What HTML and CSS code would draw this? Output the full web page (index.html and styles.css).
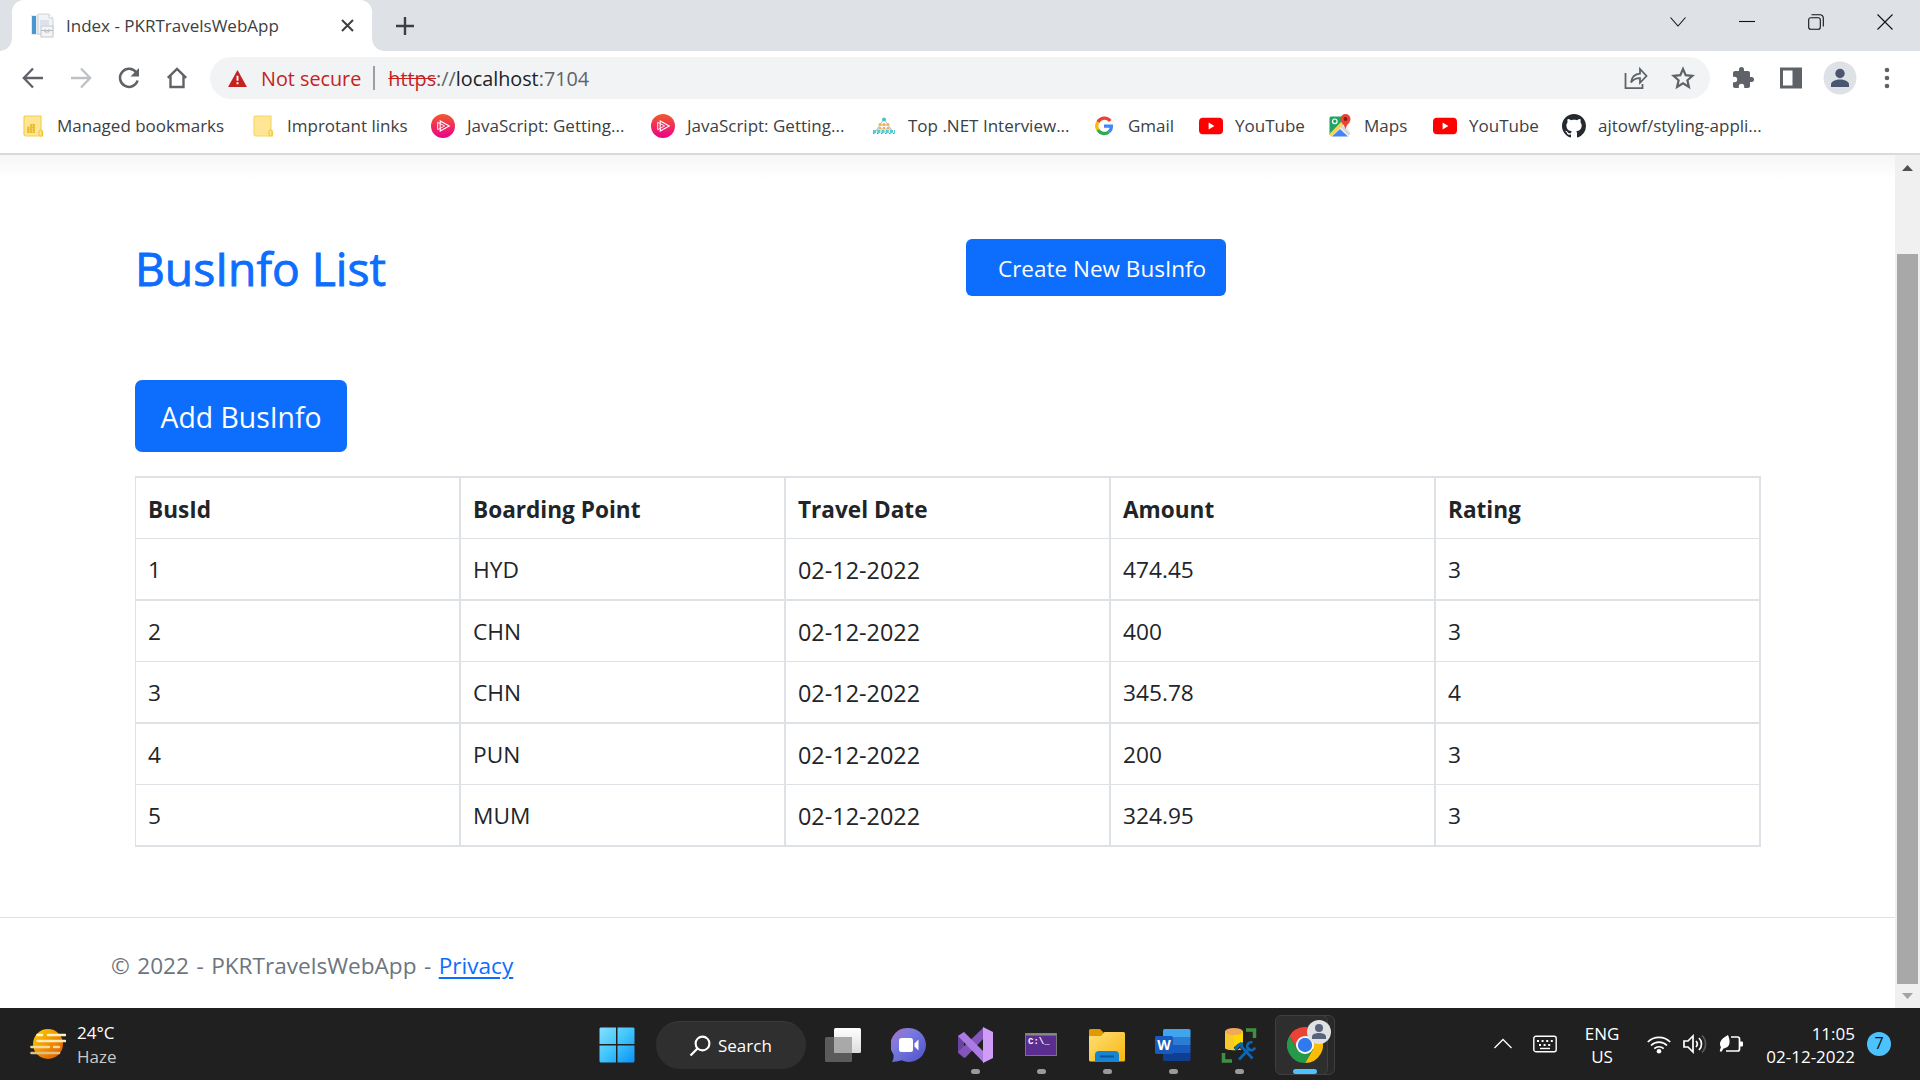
FILE: index.html
```html
<!DOCTYPE html>
<html lang="en">
<head>
<meta charset="utf-8">
<title>Index - PKRTravelsWebApp</title>
<link rel="stylesheet" href="styles.css">
</head>
<body>
<svg class="defs" width="0" height="0" aria-hidden="true">
  <defs>
    <linearGradient id="psg" x1="0" y1="0" x2="0" y2="1"><stop offset="0" stop-color="#f15b2a"/><stop offset="1" stop-color="#ec008c"/></linearGradient>
    <linearGradient id="wing" x1="0" y1="0" x2="1" y2="1"><stop offset="0" stop-color="#85e0ff"/><stop offset=".5" stop-color="#3fc4fb"/><stop offset="1" stop-color="#0a93f8"/></linearGradient>
    <linearGradient id="chatg" x1="0" y1="0" x2="1" y2="1"><stop offset="0" stop-color="#b070c0"/><stop offset=".35" stop-color="#7a7ae0"/><stop offset="1" stop-color="#4f52c8"/></linearGradient>
    <linearGradient id="foldg" x1="0" y1="0" x2="1" y2="1"><stop offset="0" stop-color="#ffe07a"/><stop offset="1" stop-color="#f9b60c"/></linearGradient>
    <linearGradient id="sung" x1="0" y1="0" x2="1" y2="1"><stop offset="0" stop-color="#ffd500"/><stop offset="1" stop-color="#e04e00"/></linearGradient>
    <linearGradient id="viewg" x1="0" y1="0" x2="0" y2="1"><stop offset="0" stop-color="#ffffff"/><stop offset="1" stop-color="#dcdcdc"/></linearGradient>
    <symbol id="pluralsight" viewBox="0 0 24 24">
      <circle cx="12" cy="12" r="12" fill="url(#psg)"/>
      <path d="M9.200 7v10L18.300 12z" fill="none" stroke="#fff" stroke-width="1.100"/>
      <path d="M6.700 8.300v7.400M6.700 8.300l7 3.700-7 3.700" fill="none" stroke="#fff" stroke-width=".9"/>
    </symbol>
    <symbol id="youtube" viewBox="0 0 24 24">
      <rect y="3.700" width="24" height="16.600" rx="4" fill="#f00"/>
      <path d="M9.600 8.600v6.800l5.800-3.400z" fill="#fff"/>
    </symbol>
  </defs>
</svg>

<header class="browser">
  <div class="tabstrip">
    <div class="tab">
      <svg class="favicon" width="25" height="25" viewBox="0 0 25 25">
        <rect x="1" y="2" width="10" height="20" fill="#e3ecf4"/><rect x="2" y="3" width="4" height="18" fill="#4d96cd"/>
        <path d="M8 1h11l4 4v16H8z" fill="#f1f3f7" stroke="#c5c9d1" stroke-width=".8"/><path d="M19 1v4h4" fill="#fff" stroke="#c5c9d1" stroke-width=".8"/>
        <path d="M10 7h9v5h-9z" fill="#dde1ec"/><rect x="11" y="13" width="12" height="11" fill="#f4f4f4" stroke="#b8bbc0" stroke-width=".8"/><path d="M11 17.500h12M15 16v3h4v-3" stroke="#b8bbc0" fill="none"/>
      </svg>
      <span class="tab-title">Index - PKRTravelsWebApp</span>
      <svg class="tab-close" width="13" height="13" viewBox="0 0 13 13"><path d="M1 1l11 11M12 1L1 12" stroke="#3c4043" stroke-width="2"/></svg>
    </div>
    <svg class="newtab" width="18" height="18" viewBox="0 0 18 18"><path d="M9 0v18M0 9h18" stroke="#3c4043" stroke-width="2.400"/></svg>
    <div class="window-controls">
      <svg width="16" height="16" viewBox="0 0 16 16"><path d="M.5 3.500L8 12l7.500-8.500" class="thin"/></svg>
      <svg width="16" height="16" viewBox="0 0 16 16"><path d="M0 7.500h16" class="thin"/></svg>
      <svg width="16" height="16" viewBox="0 0 16 16"><rect x=".7" y="3.700" width="11.600" height="11.600" rx="2" class="thin"/><path d="M3.500 .7h8.500a3.300 3.300 0 0 1 3.300 3.300v8.500" class="thin"/></svg>
      <svg width="16" height="16" viewBox="0 0 16 16"><path d="M.5 .5l15 15M15.500 .5l-15 15" class="thin"/></svg>
    </div>
  </div>

  <div class="toolbar">
    <div class="nav">
      <svg width="24" height="24" viewBox="0 0 24 24"><path d="M22 12H3M12 2.500L2.800 12l9.200 9.500" fill="none" stroke="#5f6368" stroke-width="2.300"/></svg>
      <svg width="24" height="24" viewBox="0 0 24 24"><path d="M2 12h19M12 2.500l9.200 9.500-9.200 9.500" fill="none" stroke="#bdc1c6" stroke-width="2.300"/></svg>
      <svg width="24" height="24" viewBox="0 0 24 24"><path d="M19.300 6.600A9 9 0 1 0 20.600 14.500" fill="none" stroke="#5f6368" stroke-width="2.500"/><path d="M22 2v8.500h-8.500z" fill="#5f6368"/></svg>
      <svg width="24" height="24" viewBox="0 0 24 24"><path d="M2.800 11.800L12 3l9.200 8.800M5.500 10v11h13V10" fill="none" stroke="#5f6368" stroke-width="2.400"/></svg>
    </div>
    <div class="omnibox">
      <svg class="warn" width="19" height="17" viewBox="0 0 20 18"><path d="M10 0l10 18H0z" fill="#c5221f"/><path d="M9 6h2v5.500H9zM9 13h2v2.200H9z" fill="#fff"/></svg>
      <span class="not-secure">Not secure</span>
      <span class="divider"></span>
      <span class="url"><s>https</s>://<b>localhost</b>:7104</span>
      <svg class="share" width="24" height="24" viewBox="0 0 24 24"><path d="M1.500 7v15.200h17V18M7 16.500c.8-5.500 3.500-8.500 9-8.800V3l6.500 7-6.500 6.800v-4.600c-4-.2-6.500 1-9 4.300z" fill="none" stroke="#5f6368" stroke-width="1.800"/></svg>
      <svg class="star" width="24" height="24" viewBox="0 0 24 24"><path d="M12 3l2.700 6.200 6.800.6-5.100 4.500 1.500 6.600-5.900-3.500-5.900 3.500 1.500-6.600-5.100-4.500 6.800-.6z" fill="none" stroke="#5f6368" stroke-width="2.200"/></svg>
    </div>
    <div class="actions">
      <svg width="24" height="24" viewBox="0 0 24 24"><path d="M20.500 11H19V7c0-1.100-.9-2-2-2h-4V3.500a2.500 2.500 0 0 0-5 0V5H4c-1.100 0-2 .9-2 2v3.800h1.500a2.700 2.700 0 0 1 0 5.400H2V20c0 1.100.9 2 2 2h3.800v-1.500a2.700 2.700 0 0 1 5.400 0V22H17c1.100 0 2-.9 2-2v-4h1.500a2.500 2.500 0 0 0 0-5z" fill="#5f6368"/></svg>
      <svg width="24" height="24" viewBox="0 0 24 24"><path d="M1 1.500h22v21H1zM4 4.500v15h9.500v-15z" fill="#5f6368" fill-rule="evenodd"/></svg>
      <svg width="34" height="34" viewBox="0 0 34 34"><circle cx="17" cy="17" r="16.500" fill="#dee1e6"/><circle cx="17" cy="12.500" r="4.700" fill="#4a5670"/><path d="M8 26v-2.500c0-3.500 5-5 9-5s9 1.500 9 5V26z" fill="#4a5670"/></svg>
      <svg width="6" height="22" viewBox="0 0 6 22"><g fill="#5f6368"><circle cx="3" cy="3" r="2.300"/><circle cx="3" cy="11" r="2.300"/><circle cx="3" cy="19" r="2.300"/></g></svg>
    </div>
  </div>

  <nav class="bookmarks">
    <span class="bookmark"><svg width="24" height="24" viewBox="0 0 24 24"><path d="M4 2h16v15h1.500v5H5a2 2 0 0 1-2-2V3z" fill="#ffe694" stroke="#f5cf4b" stroke-width="1.200"/><rect x="18" y="16" width="3" height="6" rx="1.500" fill="#ffe694" stroke="#f0c02e"/><path d="M6 12.500h3V10h5v9H6z" fill="#e6c03c"/><path d="M8 14h1M11 12h1M8 17h1M11 15h1M11 17.500h1" stroke="#ffe694"/></svg><span>Managed bookmarks</span></span>
    <span class="bookmark"><svg width="24" height="24" viewBox="0 0 24 24"><path d="M4 2h16v15h1.500v5H5a2 2 0 0 1-2-2V3z" fill="#ffe694" stroke="#f5d868" stroke-width="1.200"/><rect x="18" y="16" width="3" height="6" rx="1.500" fill="#ffe694" stroke="#f0c02e"/></svg><span>Improtant links</span></span>
    <span class="bookmark"><svg width="24" height="24"><use href="#pluralsight"/></svg><span>JavaScript: Getting...</span></span>
    <span class="bookmark"><svg width="24" height="24"><use href="#pluralsight"/></svg><span>JavaScript: Getting...</span></span>
    <span class="bookmark"><svg width="24" height="24" viewBox="0 0 24 24"><path d="M12 5L3 18M12 5l9 13M8 11h8M5 15h14" stroke="#b4bdc0" stroke-width="1"/><circle cx="12" cy="5.500" r="2" fill="#4fc0c8"/><g fill="#f3b04d"><circle cx="8" cy="10.500" r="1.500"/><circle cx="12" cy="10.500" r="1.500"/><circle cx="16" cy="10.500" r="1.500"/><circle cx="8" cy="14" r="1.300"/><circle cx="12" cy="14" r="1.300"/><circle cx="16" cy="14" r="1.300"/></g><path d="M1 17.500h22" stroke="#5cc8cf" stroke-width="3" stroke-dasharray="3.200 1"/><path d="M1 19.500h22" stroke="#788" stroke-dasharray="1.500 2.500"/></svg><span>Top .NET Interview...</span></span>
    <span class="bookmark"><svg width="24" height="24" viewBox="0 0 24 24"><g fill="none" stroke-width="3.300"><path d="M18.300 7.100A7.400 7.400 0 0 0 5.900 8.100" stroke="#ea4335"/><path d="M5.900 8.100a7.400 7.400 0 0 0 0 7.800" stroke="#fbbc05"/><path d="M5.900 15.900a7.400 7.400 0 0 0 10.800 2.100" stroke="#34a853"/><path d="M16.700 18a7.400 7.400 0 0 0 2.700-5.800H12" stroke="#4285f4"/></g></svg><span>Gmail</span></span>
    <span class="bookmark"><svg width="24" height="24"><use href="#youtube"/></svg><span>YouTube</span></span>
    <span class="bookmark"><svg width="24" height="24" viewBox="0 0 24 24"><path d="M1.500 2.500h20v20h-20z" fill="#f3f4f5"/><path d="M3 2.500h12V9L1.500 21V4a1.500 1.500 0 0 1 1.500-1.500z" fill="#1fa463"/><path d="M15 8.500L2.500 21.500" stroke="#ffd04b" stroke-width="3.600"/><path d="M13 12l8.500 8.500" stroke="#d5d8db" stroke-width="3"/><path d="M4 22.500l8-7.500 8 7.500z" fill="#4285f4"/><circle cx="6.800" cy="7.300" r="2.300" fill="none" stroke="#fff" stroke-width="1.200"/><path d="M17.500 0a5 5 0 0 1 5 5c0 4-4 5-5 10.500-1-5.500-5-6.500-5-10.500a5 5 0 0 1 5-5z" fill="#ea4335"/><circle cx="17.500" cy="5" r="1.900" fill="#8c1a12"/></svg><span>Maps</span></span>
    <span class="bookmark"><svg width="24" height="24"><use href="#youtube"/></svg><span>YouTube</span></span>
    <span class="bookmark"><svg width="24" height="24" viewBox="0 0 16 16"><path fill="#24292f" fill-rule="evenodd" d="M8 0C3.580 0 0 3.580 0 8c0 3.540 2.290 6.530 5.470 7.590.4.070.55-.17.55-.38 0-.19-.01-.82-.01-1.490-2.010.37-2.530-.49-2.690-.94-.09-.23-.48-.94-.82-1.130-.28-.15-.68-.52-.01-.53.63-.01 1.080.58 1.230.82.72 1.210 1.870.87 2.330.66.07-.52.28-.87.51-1.070-1.780-.2-3.640-.89-3.640-3.950 0-.87.31-1.590.82-2.150-.08-.2-.36-1.020.08-2.120 0 0 .67-.21 2.200.82.64-.18 1.320-.27 2-.27s1.360.09 2 .27c1.530-1.040 2.200-.82 2.200-.82.44 1.100.16 1.920.08 2.120.51.56.82 1.270.82 2.150 0 3.070-1.870 3.750-3.650 3.950.29.25.54.73.54 1.480 0 1.070-.01 1.930-.01 2.200 0 .21.15.46.55.38A8.010 8.010 0 0 0 16 8c0-4.420-3.580-8-8-8z"/></svg><span>ajtowf/styling-appli...</span></span>
  </nav>
</header>

<div class="viewport">
  <div class="page">
    <main class="content">
      <div class="title-row">
        <h1>BusInfo List</h1>
        <a class="btn create">Create New BusInfo</a>
      </div>
      <a class="btn add">Add BusInfo</a>
      <table>
        <thead><tr><th>BusId</th><th>Boarding Point</th><th>Travel Date</th><th>Amount</th><th>Rating</th></tr></thead>
        <tbody>
          <tr><td>1</td><td>HYD</td><td class="date">02-12-2022</td><td>474.45</td><td>3</td></tr>
          <tr><td>2</td><td>CHN</td><td class="date">02-12-2022</td><td>400</td><td>3</td></tr>
          <tr><td>3</td><td>CHN</td><td class="date">02-12-2022</td><td>345.78</td><td>4</td></tr>
          <tr><td>4</td><td>PUN</td><td class="date">02-12-2022</td><td>200</td><td>3</td></tr>
          <tr><td>5</td><td>MUM</td><td class="date">02-12-2022</td><td>324.95</td><td>3</td></tr>
        </tbody>
      </table>
    </main>
    <footer>© 2022 - PKRTravelsWebApp - <a>Privacy</a></footer>
  </div>
  <div class="scrollbar">
    <svg width="11" height="6" viewBox="0 0 11 6"><path d="M5.500 0L11 6H0z" fill="#505050"/></svg>
    <div class="thumb"></div>
    <svg width="11" height="6" viewBox="0 0 11 6"><path d="M0 0h11L5.500 6z" fill="#a3a3a3"/></svg>
  </div>
</div>

<div class="taskbar">
  <div class="weather">
    <svg width="36" height="32" viewBox="0 0 36 32"><circle cx="18" cy="16" r="15" fill="url(#sung)"/><g stroke-width="2.600" stroke-linecap="round"><path d="M7.500 7h4.500M18 7h17" stroke="#fff3c4"/><path d="M7.500 13H35" stroke="#fdeab8"/><path d="M1.500 19H19M24 19h5" stroke="#f3d9a0"/><path d="M1.500 25H29" stroke="#dfbf85"/></g></svg>
    <div class="lines"><span>24°C</span><span class="dim">Haze</span></div>
  </div>
  <div class="apps">
    <span class="app"><svg width="36" height="36" viewBox="0 0 36 36"><path d="M1.500 .5H17v16.500H.5V1.500zM18.500 .5h16l1 1V17h-17zM.5 18.500H17V35.500H1.500l-1-1zM18.500 18.500h17v16l-1 1h-16z" fill="url(#wing)"/></svg></span>
    <span class="search"><svg width="22" height="22" viewBox="0 0 22 22"><circle cx="13.500" cy="8.500" r="6.900" fill="none" stroke="#fff" stroke-width="2.100"/><path d="M8.500 13.500L1.500 20.500" stroke="#fff" stroke-width="2.300"/></svg>Search</span>
    <span class="app"><svg width="36" height="36" viewBox="0 0 36 36"><rect x="9" y="1" width="27" height="25" rx="1.500" fill="url(#viewg)"/><rect y="10" width="27" height="25" rx="1.500" fill="#5b5b5b"/><path d="M9 10h18v16H9z" fill="#a9a9a9"/></svg></span>
    <span class="app"><svg width="36" height="36" viewBox="0 0 36 36"><path d="M18 1a17 17 0 1 1-7.500 32.300C7 34.500 3.500 35 1 35c1.500-2.500 1.800-5 1.500-7.500A17 17 0 0 1 18 1z" fill="url(#chatg)"/><rect x="8" y="11" width="14" height="14" rx="2.500" fill="#fff"/><path d="M23.500 16.500l4-4v11l-4-4z" fill="#fff"/></svg></span>
    <span class="app running"><svg width="36" height="36" viewBox="0 0 36 36"><path d="M1 9l6-4v26l-6-5z" fill="#6a43a0"/><path d="M1 25L27 0v11L8 31z" fill="#8456bd"/><path d="M1 9l6-4 20 20v11z" fill="#ab7be3"/><path d="M26 0l10 5v26l-10 5z" fill="#cf9df8"/></svg></span>
    <span class="app running"><svg width="36" height="36" viewBox="0 0 36 36"><rect x="2.500" y="6.500" width="31" height="22" fill="#5c2d91" stroke="#777"/><path d="M3 7.500h30" stroke="#8a8a8a" stroke-width="2"/><text x="5" y="16.500" class="prompt">C:\_</text></svg></span>
    <span class="app running"><svg width="36" height="36" viewBox="0 0 36 36"><path d="M0 3.500a1.500 1.500 0 0 1 1.500-1.500H11l4 4-3 6H0z" fill="#e09a00"/><path d="M0 9h12l3.500-4H34.500a1.500 1.500 0 0 1 1.500 1.500V33a1.500 1.500 0 0 1-1.500 1.500h-33A1.500 1.500 0 0 1 0 33z" fill="url(#foldg)"/><path d="M6 34.500V28a4 4 0 0 1 4-4h16a4 4 0 0 1 4 4v6.500z" fill="#1683d3"/><path d="M11 29.500h14" stroke="#0b559f" stroke-width="2"/></svg></span>
    <span class="app running"><svg width="36" height="36" viewBox="0 0 36 36"><path d="M8 3.500A1.500 1.500 0 0 1 9.500 2h24.500a1.500 1.500 0 0 1 1.500 1.500V10H8z" fill="#41a5ee"/><path d="M8 10h27.500v8H8z" fill="#2b7cd3"/><path d="M8 18h27.500v8H8z" fill="#185abd"/><path d="M8 26h27.500v6.500A1.500 1.500 0 0 1 34 34H9.500A1.500 1.500 0 0 1 8 32.500z" fill="#103f91"/><rect y="9" width="18" height="18" rx="1.500" fill="#185abd"/><text x="9" y="22.500" class="word-letter">W</text></svg></span>
    <span class="app running"><svg width="36" height="36" viewBox="0 0 36 36"><path d="M4 4v17c0 3 18 3 18 0V4z" fill="#f8c92c"/><path d="M13 5v18c5 0 9-.7 9-2V4z" fill="#ffd900"/><ellipse cx="13" cy="4.500" rx="9" ry="3.500" fill="#efa85c"/><path d="M25 3h8.500v8M2.500 26v8H11" fill="none" stroke="#3f9142" stroke-width="3.500"/><g fill="none" stroke="#202020" stroke-width="4.500"><path d="M14 22l7-5M20 19l12 13M18 32l11-11"/></g><g fill="none" stroke="#0b66b5"><path d="M14.500 22.500c1-3 4-5.500 7.500-5.500" stroke-width="3.500"/><path d="M20 19l11.500 12.500M18 32.500l11-11.500" stroke-width="2.800"/><path d="M31.500 15.500a4 4 0 1 0 2.500 5" stroke-width="2.600"/></g></svg></span>
    <span class="app active"><span class="tile-back"></span><span class="tile"></span>
      <svg class="chrome" width="36" height="36" viewBox="0 0 36 36"><path d="M2.400 9A18 18 0 0 1 33.600 9H18L10.200 22.500z" fill="#ea4335"/><path d="M33.600 9A18 18 0 0 1 18 36l7.800-13.500L18 9z" fill="#fbbc05"/><path d="M18 36A18 18 0 0 1 2.400 9l7.800 13.500h15.600z" fill="#259b49"/><circle cx="18" cy="18" r="9" fill="#fff"/><circle cx="18" cy="18" r="7.200" fill="#2f7bee"/></svg>
      <svg class="profile" width="24" height="24" viewBox="0 0 24 24"><circle cx="12" cy="12" r="12" fill="#dfe1e5"/><circle cx="12" cy="8" r="4" fill="#596379"/><path d="M5 19v-2.500c0-2.500 4-3.500 7-3.500s7 1 7 3.500V19z" fill="#596379"/></svg>
    </span>
  </div>
  <div class="tray">
    <svg class="chev" width="18" height="18" viewBox="0 0 18 18"><path d="M.5 13L9 4.500l8.500 8.500" fill="none" stroke="#fff" stroke-width="1.300"/></svg>
    <svg class="kbd" width="24" height="18" viewBox="0 0 24 18"><rect x=".8" y="1.300" width="22.400" height="15.400" rx="2" fill="none" stroke="#fff" stroke-width="1.400"/><path d="M4 6h16M6 10h13" stroke="#fff" stroke-width="2" stroke-dasharray="2 2.600"/><path d="M7 13.500h10" stroke="#fff" stroke-width="1.400"/></svg>
    <div class="lines lang"><span>ENG</span><span>US</span></div>
    <svg class="wifi" width="24" height="20" viewBox="0 0 24 20"><g fill="none" stroke="#fff" stroke-width="1.700"><path d="M.8 8a15.800 15.800 0 0 1 22.400 0M4 11.500a11.300 11.300 0 0 1 16 0M7.300 14.700a6.700 6.700 0 0 1 9.400 0"/></g><circle cx="12" cy="17.300" r="2.300" fill="#fff"/></svg>
    <svg class="sound" width="24" height="20" viewBox="0 0 24 20"><g fill="none" stroke="#fff" stroke-width="1.700"><path d="M1 7h4l5-5v16l-5-5H1z"/><path d="M13 7a4.500 4.500 0 0 1 0 6M16 4a8.500 8.500 0 0 1 0 12"/><path d="M19 1.500a12 12 0 0 1 0 17" stroke="#5a5a5a"/></g></svg>
    <svg class="battery" width="24" height="20" viewBox="0 0 24 20"><path d="M12 3h6.500a2 2 0 0 1 2 2v10a2 2 0 0 1-2 2H7" fill="none" stroke="#fff" stroke-width="1.700"/><path d="M21 7.500h2a1 1 0 0 1 1 1v3a1 1 0 0 1-1 1h-2z" fill="#fff"/><path d="M9 1c2.200 5 2.500 10.500-1.500 12.500-2 1-3.500.3-4.500 4H.8c.2-2 .7-3.200 1.200-4.200C-1 8.500 3 4 9 1z" fill="#fff"/></svg>
    <div class="lines clock"><span>11:05</span><span>02-12-2022</span></div>
    <span class="badge">7</span>
  </div>
</div>
</body>
</html>
```
FILE: styles.css
```css
* { box-sizing: border-box; }
body {
  margin: 0;
  width: 1920px;
  height: 1080px;
  overflow: hidden;
  display: flex;
  flex-direction: column;
  background: #fff;
  color: #212529;
  font-family: "Open Sans", "Noto Sans", sans-serif;
}
svg { display: block; flex: none; }
.defs { position: absolute; }

/* Browser chrome */
.browser { height: 155px; border-bottom: 2px solid #d9dadb; flex: none; }
.tabstrip { height: 51px; background: #dee1e6; display: flex; align-items: flex-start; padding-left: 12px; }
.tab {
  position: relative;
  width: 360px;
  height: 51px;
  padding: 0 18px;
  display: flex;
  align-items: center;
  background: #fff;
  border-radius: 12px 12px 0 0;
}
.tab::before, .tab::after {
  content: "";
  position: absolute;
  bottom: 0;
  width: 12px;
  height: 12px;
}
.tab::before { left: -12px; background: radial-gradient(circle at 0 0, #dee1e6 11.500px, #fff 12px); }
.tab::after { right: -12px; background: radial-gradient(circle at 100% 0, #dee1e6 11.500px, #fff 12px); }
.tab-title { margin-left: 11px; font-size: 17px; color: #3c4043; white-space: nowrap; }
.tab-close { margin-left: auto; }
.newtab { margin: 17px 0 0 24px; }
.window-controls { margin: 14px 27px 0 auto; display: flex; gap: 53px; }
.thin { fill: none; stroke: #111; stroke-width: 1.100; }

.toolbar { height: 54px; display: flex; align-items: center; padding-left: 21px; }
.nav { display: flex; gap: 24px; }
.omnibox {
  width: 1500px;
  height: 42px;
  margin-left: 21px;
  padding: 0 15px 0 18px;
  border-radius: 21px;
  background: #f1f3f4;
  display: flex;
  align-items: center;
  font-size: 19.800px;
}
.not-secure { margin-left: 14px; color: #c5221f; }
.divider { width: 2px; height: 24px; margin: 0 13px 0 12px; background: #9aa0a6; }
.url { color: #5f6368; }
.url s { color: #c5221f; }
.url b { color: #202124; font-weight: 400; }
.share { margin-left: auto; }
.star { margin-left: 23px; }
.actions { display: flex; align-items: center; margin-left: 21px; }
.actions svg + svg { margin-left: 24px; }
.actions svg:nth-child(3) { margin-left: 20px; }
.actions svg:nth-child(4) { margin-left: 27px; }

.bookmarks {
  height: 43px;
  padding: 0 0 1px 21px;
  display: grid;
  grid-template-columns: 230px 180px 220px 221px 220px 107px 129px 105px 129px auto;
  align-items: center;
  font-size: 17px;
  color: #3c4043;
}
.bookmark { display: flex; align-items: center; gap: 12px; white-space: nowrap; }
.bookmark span { padding-bottom: 2px; }

/* Web page */
.viewport { flex: 1; display: flex; min-height: 0; }
.page {
  width: 1895px;
  display: flex;
  flex-direction: column;
  background: linear-gradient(#f6f6f6, #fff 24px);
}
.content { flex: 1; padding: 84px 134px 0 135px; }
.title-row { display: flex; align-items: flex-start; height: 141px; }
h1 {
  width: 831px;
  margin: 0;
  font-size: 46.200px;
  font-weight: 500;
  line-height: 60px;
  color: #0d6efd;
  -webkit-text-stroke: 0.900px #0d6efd;
}
.btn { display: block; color: #fff; background: #0d6efd; white-space: nowrap; }
.create { width: 260px; height: 57px; padding-left: 32px; border-radius: 6px; font-size: 22.500px; line-height: 59px; }
.add { width: 212px; height: 72px; border-radius: 7px; font-size: 28.350px; line-height: 74px; text-align: center; }
table {
  width: 1626px;
  margin-top: 24px;
  border-spacing: 0;
  table-layout: fixed;
  border-top: 2px solid #dee2e6;
  border-left: 1px solid #dee2e6;
}
th, td {
  height: 61px;
  padding: 2px 12px 0;
  text-align: left;
  line-height: 36px;
  border-right: 2px solid #dee2e6;
  border-bottom: 1px solid #dee2e6;
}
th { padding-top: 4px; font-size: 22.600px; font-weight: 700; }
td { font-size: 22.700px; }
.date { font-size: 23.400px; }
tbody tr:nth-child(odd) td { height: 62px; border-bottom-width: 2px; }
footer {
  height: 91px;
  padding: 0 0 0 111px;
  border-top: 1px solid #dee0e2;
  font-size: 22.600px;
  word-spacing: 1.600px;
  line-height: 95px;
  color: #6c757d;
}
footer a { color: #0d6efd; text-decoration: underline; text-decoration-thickness: 2px; text-underline-offset: 3px; }

.scrollbar {
  width: 25px;
  padding: 10px 0 9px;
  display: flex;
  flex-direction: column;
  align-items: center;
  background: #f0f0f0;
}
.thumb { flex: 1; width: 21px; margin: 83px 0 9px; background: #a8a8a8; }

/* Taskbar */
.taskbar {
  height: 72px;
  flex: none;
  display: flex;
  align-items: center;
  background: #202020;
  color: #fff;
  font-size: 17px;
}
.lines { display: flex; flex-direction: column; line-height: 23px; padding-top: 1px; white-space: nowrap; }
.weather .lines { line-height: 24px; padding-top: 2px; }
.dim { color: #c8c8c8; }
.weather { width: 584px; padding-left: 30px; display: flex; align-items: center; gap: 11px; }
.apps { display: flex; align-items: center; }
.app { position: relative; width: 66px; height: 72px; padding-top: 2px; display: flex; align-items: center; justify-content: center; }
.app svg { position: relative; }
.running::after, .active::after {
  content: "";
  position: absolute;
  left: 29px;
  bottom: 6px;
  width: 9px;
  height: 5px;
  border-radius: 3px;
  background: #9a9a9a;
}
.active::after { left: 21px; width: 24px; background: #4cc2ff; }
.search {
  width: 150px;
  height: 48px;
  margin: 2px 4px 0 6px;
  padding-left: 33px;
  display: flex;
  align-items: center;
  gap: 7px;
  border-radius: 24px;
  background: #2f2f2f;
  border-top: 1px solid #3b3b3b;
}
.prompt { font: 700 9px "Liberation Mono", monospace; fill: #fff; }
.word-letter { font: 700 14px "Open Sans", sans-serif; fill: #fff; text-anchor: middle; }
.tile, .tile-back { position: absolute; top: 7px; height: 60px; border: 1px solid #3f3f3f; border-radius: 6px; }
.tile { left: 3px; width: 53px; background: #2e2e2e; }
.tile-back { left: 10px; width: 53px; background: #292929; }
.app .profile { position: absolute; left: 35px; top: 12px; }

.tray { flex: 1; display: flex; align-items: center; }
.chev { margin-left: 156px; }
.kbd { margin-left: 21px; }
.lang { width: 60px; margin-left: 15px; align-items: center; }
.wifi { margin-left: 15px; }
.sound, .battery { margin-left: 12px; }
.clock { width: 112px; align-items: flex-end; }
.badge { width: 24px; height: 24px; margin-left: 12px; border-radius: 50%; background: #4cc2ff; color: #111; line-height: 23px; text-align: center; font-size: 16px; }
```
